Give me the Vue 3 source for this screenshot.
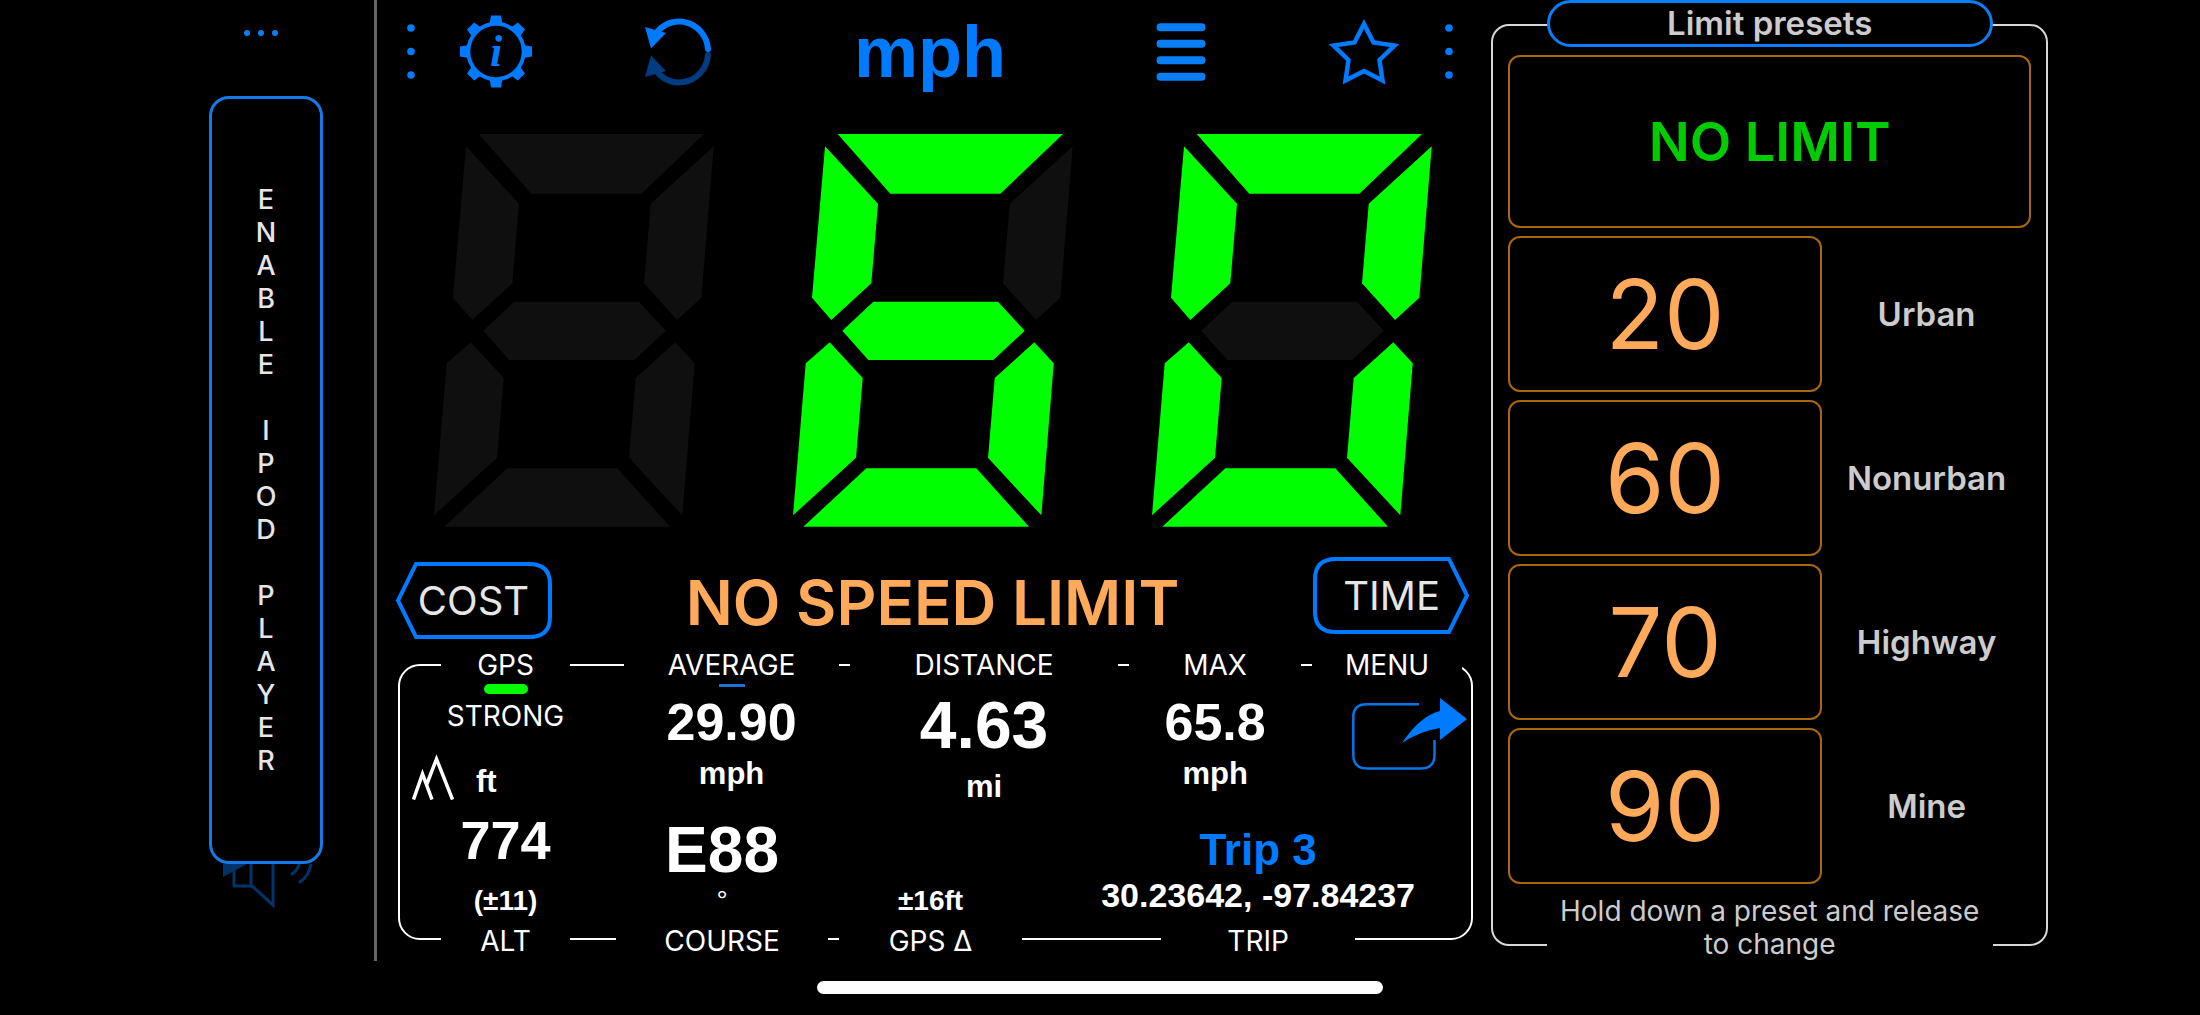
<template>
  <div class="app">
    <main class="dashboard">
      <!-- player rail -->
      <aside class="rail">
        <button class="icon-btn" aria-label="More">
          <svg width="114" height="96" viewBox="0 0 114 96">
            <circle v-for="x in [38, 52, 66]" :key="x" :cx="x" cy="33" r="3" fill="#0a7ff5" />
          </svg>
        </button>
        <button class="player-btn">
          <span>ENABLE IPOD PLAYER</span>
        </button>
        <button class="icon-btn" aria-label="Volume">
          <svg width="114" height="97" viewBox="0 0 114 97" fill="none" stroke="#003468" stroke-width="3">
            <path d="M14 0V13L38 0Z" fill="#003468" stroke="none" />
            <path d="M25 0V22H42V0M42 21L64 41V0" />
            <path d="M90 0Q89 6 83 10M102 0Q100 12 91 18" stroke-linecap="round" />
          </svg>
        </button>
      </aside>

      <section class="main">
        <nav class="toolbar">
          <button class="icon-btn" aria-label="Previous tools">
            <svg width="8" height="103" viewBox="0 0 8 103">
              <circle v-for="y in [28, 51.5, 75]" :key="y" cx="4" :cy="y" r="3.8" fill="#007aff" />
            </svg>
          </button>
          <button class="icon-btn" aria-label="Settings">
            <svg width="72" height="73" viewBox="-36 -36.5 72 73">
              <circle r="27.7" fill="none" stroke="#007aff" stroke-width="4" />
              <path
                v-for="n in 8"
                :key="n"
                d="M-5 -36H5L6.5 -27H-6.5Z"
                fill="#007aff"
                :transform="`rotate(${n * 45})`"
              />
              <text class="info-glyph" x="0" y="14" text-anchor="middle">i</text>
            </svg>
          </button>
          <button class="icon-btn" aria-label="Reset">
            <svg width="68" height="74" viewBox="0 0 68 74">
              <g v-for="part in resetArrows" :key="part.color" :fill="part.color" :stroke="part.color" :transform="part.transform">
                <path d="M12.5 16.5A29 30 0 0 1 63 34" fill="none" stroke-width="6" stroke-linecap="round" />
                <path d="M0 12L21 18L6 33.5Z" stroke="none" />
              </g>
            </svg>
          </button>
          <button class="unit-btn">mph</button>
          <button class="icon-btn" aria-label="List">
            <svg width="50" height="58" viewBox="0 0 50 58" stroke="#0a7ff5" stroke-width="8" stroke-linecap="round">
              <path d="M4.5 4.2H45.5M4.5 20.7H45.5M4.5 37.2H45.5M4.5 53.7H45.5" />
            </svg>
          </button>
          <button class="icon-btn" aria-label="Favourites">
            <svg width="72" height="68" viewBox="0 0 72 68" fill="none" stroke="#007aff" stroke-width="4.5">
              <path d="M36 6L45.5 24.5L66.5 27.5L51.5 42L54.5 62.5L36 53L17.5 62.5L20.5 42L5.5 27.5L26.5 24.5Z" />
            </svg>
          </button>
          <button class="icon-btn" aria-label="More tools">
            <svg width="8" height="103" viewBox="0 0 8 103">
              <circle v-for="y in [28, 51.5, 75]" :key="y" cx="4" :cy="y" r="3.8" fill="#007aff" />
            </svg>
          </button>
        </nav>

        <!-- seven segment speed readout -->
        <div class="speed" role="img" aria-label="60 mph">
          <svg v-for="(lit, i) in speedDigits" :key="i" viewBox="0 0 280 393">
            <polygon
              v-for="(points, name) in segments"
              :key="name"
              :points="points"
              :fill="lit.includes(name) ? '#00ff00' : '#0f0f0f'"
            />
          </svg>
        </div>

        <div class="banner">
          <button class="tag-btn">
            <svg width="157" height="77" viewBox="0 0 157 77">
              <path d="M21 2H134Q155 2 155 22V55Q155 75 134 75H21L3 38.5Z" />
            </svg>
            <span>COST</span>
          </button>
          <h1>NO SPEED LIMIT</h1>
          <button class="tag-btn tag-btn-top">
            <svg width="157" height="77" viewBox="0 0 157 77">
              <path d="M136 2H23Q2 2 2 22V55Q2 75 23 75H136L154 38.5Z" />
            </svg>
            <span>TIME</span>
          </button>
        </div>

        <div class="stats">
          <div class="stats-row stats-top">
            <div class="cell">
              <div class="label">GPS</div>
              <div class="signal" />
              <div class="status">STRONG</div>
              <div class="altitude">
                <svg width="42" height="46" viewBox="0 0 42 46" fill="none" stroke="#fff" stroke-width="3.5">
                  <path d="M1.5 45.5L10.5 20L20 45.5M14.5 31L24.5 5L40.5 45.5" />
                </svg>
                <span class="unit">ft</span>
              </div>
            </div>
            <div class="cell">
              <div class="label">AVERAGE</div>
              <div class="marker marker-on" />
              <div class="value">29.90</div>
              <div class="unit">mph</div>
            </div>
            <div class="cell">
              <div class="label">DISTANCE</div>
              <div class="marker" />
              <div class="value value-large">4.63</div>
              <div class="unit">mi</div>
            </div>
            <div class="cell">
              <div class="label">MAX</div>
              <div class="marker" />
              <div class="value">65.8</div>
              <div class="unit">mph</div>
            </div>
            <div class="cell">
              <div class="label">MENU</div>
              <button class="icon-btn share-btn" aria-label="Share">
                <svg width="116" height="72" viewBox="0 0 116 72">
                  <path d="M67 6.3H15Q1.3 6.3 1.3 19V57Q1.3 70.5 15 70.5H69Q82.5 70.5 82.5 57V42" fill="none" stroke="#0a74e6" stroke-width="2.5" />
                  <path d="M88 0L115 21L88 42V30Q68 33 50 45Q68 18 88 13Z" fill="#007aff" />
                </svg>
              </button>
            </div>
          </div>

          <div class="stats-row stats-bottom">
            <div class="cell">
              <div class="value value-altitude">774</div>
              <div class="note">(±11)</div>
              <div class="label">ALT</div>
            </div>
            <div class="cell">
              <div class="value value-course">E88</div>
              <div class="note note-light">°</div>
              <div class="label">COURSE</div>
            </div>
            <div class="cell">
              <div class="note">±16ft</div>
              <div class="label">GPS Δ</div>
            </div>
            <div class="cell">
              <a class="trip-name" href="#">Trip 3</a>
              <div class="coords">30.23642, -97.84237</div>
              <div class="label">TRIP</div>
            </div>
          </div>
        </div>
      </section>

      <!-- speed limit presets -->
      <section class="presets">
        <button class="presets-title">Limit presets</button>
        <button class="no-limit">NO LIMIT</button>
        <div v-for="p in presets" :key="p.id" class="preset">
          <button :id="p.id" :aria-describedby="`${p.id}-name`">{{ p.limit }}</button>
          <span :id="`${p.id}-name`">{{ p.name }}</span>
        </div>
        <p class="hint">Hold down a preset and release to change</p>
      </section>
    </main>
    <div class="home-indicator" />
  </div>
</template>

<script setup>
import { ref, computed } from 'vue'

const speed = ref(60)

const segments = {
  a: '44.7,0 270,0 207.3,59.7 97.3,59.7',
  b: '279.7,12.3 267.3,163.7 243,186 210,149.3 216.7,69.7',
  c: '241.3,208.3 260.7,229.3 248.3,381.3 195,323.7 201.7,244',
  d: '73.3,334.3 183.3,334.3 236,392.7 10.3,392.7',
  e: '36.7,208.3 69.7,244 63,323.7 0,381.3 12.7,229.3',
  f: '32,12.3 85,69.7 78.3,149.3 38.3,186 19,163.7',
  g: '80.3,167.7 205,167.7 231.7,196.7 200.3,226 75.3,226 49.3,196.7',
}

const digitSegments = {
  ' ': '',
  0: 'abcdef',
  1: 'bc',
  2: 'abged',
  3: 'abgcd',
  4: 'fgbc',
  5: 'afgcd',
  6: 'afgedc',
  7: 'abc',
  8: 'abcdefg',
  9: 'abcdfg',
}

const speedDigits = computed(() => [...String(speed.value).padStart(3)].map((d) => digitSegments[d]))

const resetArrows = [
  { color: '#007aff', transform: '' },
  { color: '#003d80', transform: 'translate(0 74) scale(1 -1)' },
]

const presets = [
  { id: 'urban', limit: 20, name: 'Urban' },
  { id: 'nonurban', limit: 60, name: 'Nonurban' },
  { id: 'highway', limit: 70, name: 'Highway' },
  { id: 'mine', limit: 90, name: 'Mine' },
]
</script>

<style>
body {
  background: #000;
}
</style>

<style scoped>
.app {
  min-height: 100vh;
  background: #000;
  color: #fff;
  font-family: Inter, 'Liberation Sans', sans-serif;
}

.app * {
  box-sizing: border-box;
}

button {
  padding: 0;
  border: none;
  background: transparent;
  color: inherit;
  font: inherit;
  cursor: pointer;
}

svg {
  display: block;
}

.dashboard {
  display: grid;
  grid-template-columns: 168fr 1114fr 557fr;
  padding: 0 6.9% 0 9.5%;
}

.rail {
  display: flex;
  flex-direction: column;
  align-items: flex-start;
  border-right: 3px solid #666;
}

.player-btn {
  flex: 1;
  display: flex;
  align-items: center;
  justify-content: center;
  width: 114px;
  border: 3px solid #147ae8;
  border-radius: 20px;
  color: #e6e6e6;
  font-size: 27px;
  font-weight: 500;
}

.player-btn span {
  writing-mode: vertical-rl;
  text-orientation: upright;
  white-space: nowrap;
}

.main {
  padding: 0 18px 21px;
}

.toolbar {
  display: grid;
  grid-template-columns: 26fr 144fr 222fr 280fr 222fr 144fr 26fr;
  align-items: center;
  justify-items: center;
  height: 103px;
  padding: 0 11px 0 3px;
}

.info-glyph {
  fill: #007aff;
  font-family: 'Liberation Serif', serif;
  font-size: 44px;
  font-style: italic;
  font-weight: 700;
}

.unit-btn {
  color: #007aff;
  font-family: 'Liberation Sans', sans-serif;
  font-size: 72px;
  font-weight: 700;
  line-height: 100px;
}

.speed {
  display: grid;
  grid-template-columns: repeat(3, 1fr);
  column-gap: 79px;
  margin-top: 31px;
  padding: 0 41px 0 39px;
}

.speed svg {
  width: 100%;
}

.banner {
  display: flex;
  align-items: flex-end;
  justify-content: space-between;
  height: 82px;
  margin-top: 30px;
  padding-right: 3px;
}

.banner h1 {
  margin: 0;
  color: #ffa95a;
  font-size: 62px;
  font-weight: 600;
  line-height: 72px;
}

.tag-btn {
  display: grid;
  place-items: center;
  color: #e6e6e6;
  font-size: 40px;
}

.tag-btn-top {
  align-self: flex-start;
}

.tag-btn > * {
  grid-area: 1 / 1;
}

.tag-btn path {
  fill: none;
  stroke: #007aff;
  stroke-width: 4;
}

.stats {
  margin: 25px 0 0 3px;
  border: 2px solid #fff;
  border-radius: 22px;
}

.stats-row {
  display: grid;
}

.stats-top {
  grid-template-columns: 41fr 129fr 54fr 215fr 11fr 268fr 11fr 172fr 11fr 150fr 9fr;
  min-height: 162px;
  margin-top: -18px;
}

.stats-bottom {
  grid-template-columns: 41fr 129fr 46fr 212fr 11fr 183fr 139fr 194fr 116fr;
  min-height: 148px;
  margin-bottom: -20px;
}

.cell {
  display: flex;
  flex-direction: column;
  align-items: center;
  min-width: 0;
  white-space: nowrap;
  font-family: 'Liberation Sans', sans-serif;
  font-weight: 700;
}

.cell:nth-child(1) {
  grid-column: 2;
}

.cell:nth-child(2) {
  grid-column: 4;
}

.cell:nth-child(3) {
  grid-column: 6;
}

.cell:nth-child(4) {
  grid-column: 8;
}

.cell:nth-child(5) {
  grid-column: 10;
}

.stats-bottom .cell {
  justify-content: flex-end;
}

.label,
.status {
  font-family: Inter, 'Liberation Sans', sans-serif;
  font-size: 28px;
  font-weight: 400;
  line-height: 34px;
}

.label {
  width: 100%;
  background: #000;
  text-align: center;
}

.signal {
  width: 44px;
  height: 10px;
  margin: 2px 0 5px;
  border-radius: 5px;
  background: #00ff00;
}

.altitude {
  display: flex;
  align-items: flex-end;
  align-self: flex-start;
  gap: 22px;
  margin: 21px 0 0 -29px;
}

.marker {
  width: 26px;
  height: 3px;
  margin: 2px 0 9px;
}

.marker-on {
  background: #1a74d4;
}

.value {
  font-size: 52px;
  line-height: 52px;
  margin-bottom: 8px;
}

.value-large {
  margin-bottom: 15px;
  font-size: 66px;
  line-height: 58px;
}

.value-altitude {
  margin-bottom: 16px;
  font-size: 54px;
  line-height: 60px;
}

.value-course {
  margin-bottom: 0;
  font-size: 64px;
  line-height: 72px;
}

.unit {
  font-size: 31px;
  line-height: 36px;
}

.note {
  margin-bottom: 8px;
  font-size: 28px;
  line-height: 30px;
}

.note-light {
  font-weight: 400;
}

.share-btn {
  align-self: flex-end;
  margin: 16px -6px 0 0;
}

.trip-name {
  color: #007aff;
  font-size: 44px;
  line-height: 50px;
  text-decoration: none;
}

.coords {
  margin-bottom: 9px;
  font-size: 34px;
  line-height: 40px;
}

.presets {
  display: flex;
  flex-direction: column;
  align-self: start;
  gap: 8px;
  margin-top: 24px;
  padding: 0 15px;
  border: 2px solid #d8d8d8;
  border-radius: 18px;
  color: #ccc;
}

.presets-title {
  align-self: center;
  width: 446px;
  height: 47px;
  margin-top: -26px;
  padding-bottom: 2px;
  border: 3px solid #0a7ff5;
  border-radius: 24px;
  background: #000;
  font-size: 33px;
  font-weight: 600;
  line-height: 38px;
}

.no-limit {
  height: 173px;
  border: 2px solid #a8670f;
  border-radius: 12px;
  color: #00cc00;
  font-size: 54px;
  font-weight: 600;
}

.preset {
  display: grid;
  grid-template-columns: 60% 1fr;
  align-items: center;
  justify-items: center;
  font-size: 33px;
  font-weight: 600;
}

.preset button {
  width: 100%;
  height: 156px;
  border: 2px solid #a8670f;
  border-radius: 12px;
  color: #ffa95a;
  font-size: 96px;
  font-weight: 400;
}

.hint {
  align-self: center;
  width: 446px;
  margin: 3px 0 -17px;
  background: #000;
  font-size: 28px;
  line-height: 33px;
  text-align: center;
}

.home-indicator {
  width: 566px;
  height: 13px;
  margin: 20px auto 0;
  border-radius: 7px;
  background: #fff;
}
</style>
